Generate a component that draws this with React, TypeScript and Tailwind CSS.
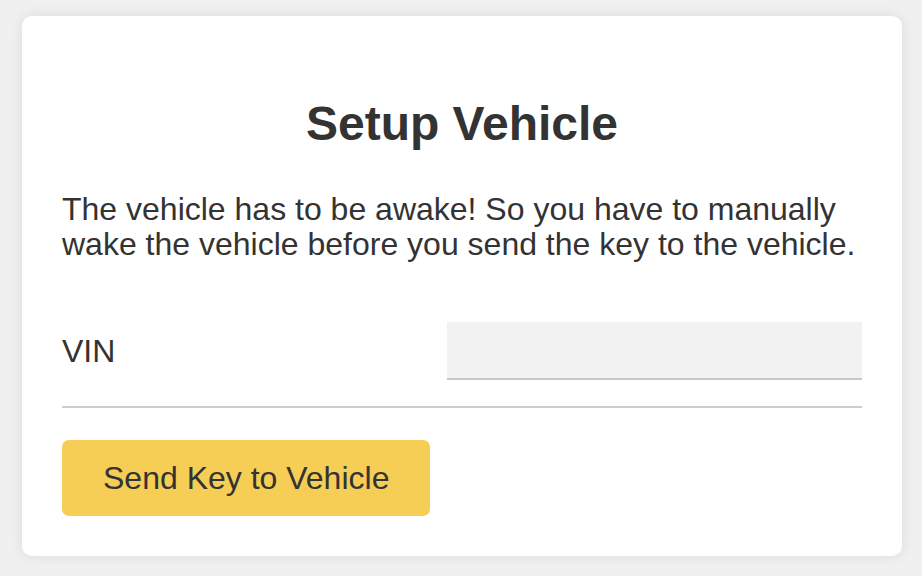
const App = () => {
  return (
    <div className="min-h-[576px] bg-[#f0f0f0] pt-[16px] pl-[22px] font-['Liberation_Sans',Arial,sans-serif] text-[#333333]">
      <div className="w-[880px] rounded-[10px] bg-white px-[40px] pt-[80px] pb-[40px] shadow-[0_0_14px_rgba(0,0,0,0.09)]">
        <h1 className="text-center text-[48px] font-bold leading-[55px]">
          Setup Vehicle
        </h1>

        <p className="mt-[41px] text-[32px] leading-[35px]">
          The vehicle has to be awake! So you have to manually wake the vehicle
          before you send the key to the vehicle.
        </p>

        <div className="mt-[60px] flex items-center">
          <label htmlFor="vin" className="flex-1 text-[32px] leading-[37px]">
            VIN
          </label>
          <input
            id="vin"
            type="text"
            className="h-[58px] w-[415px] border-b-2 border-[#c8c8c8] bg-[#f2f2f2] px-3 text-[32px] outline-none"
          />
        </div>

        <div className="mt-[26px] h-[2px] bg-[#cccccc]" />

        <button
          type="button"
          className="mt-[32px] h-[76px] rounded-[7px] bg-[#f6cd55] px-[41px] text-[32px] leading-[37px] text-[#333333]"
        >
          Send Key to Vehicle
        </button>
      </div>
    </div>
  );
};

export default App;
